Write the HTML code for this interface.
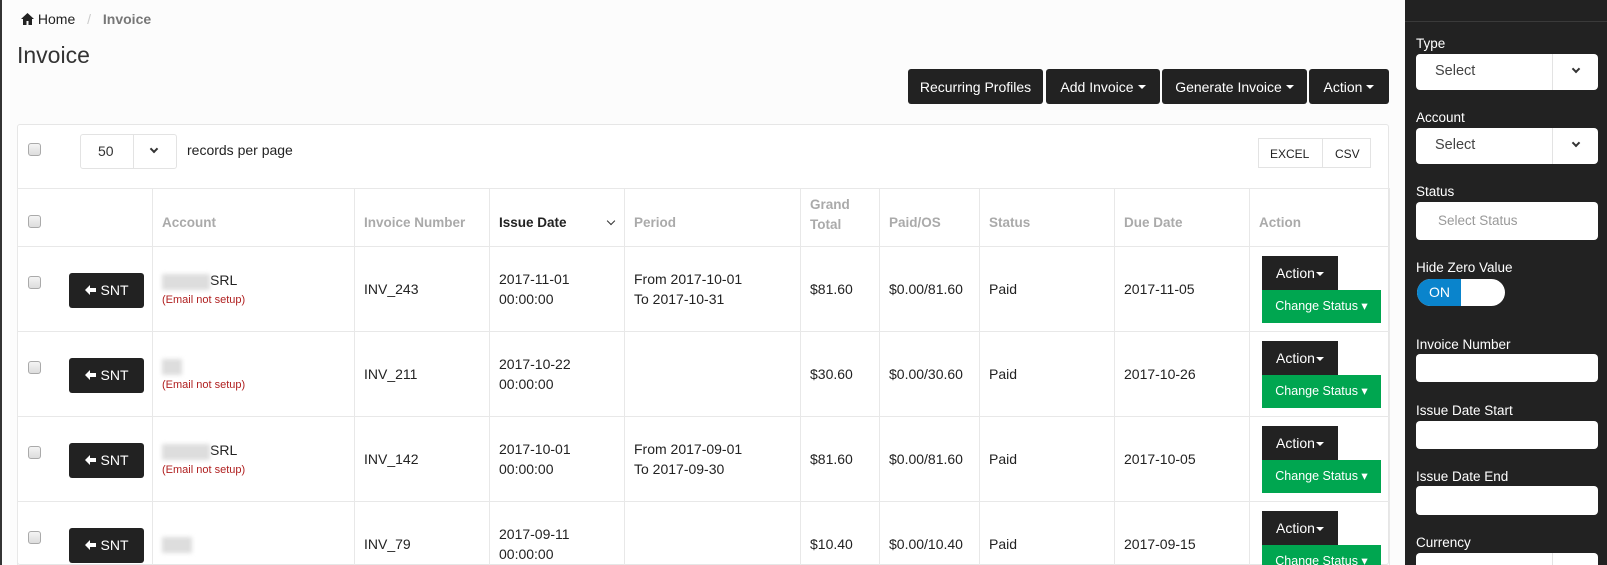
<!DOCTYPE html>
<html><head><meta charset="utf-8"><style>
*{box-sizing:border-box;margin:0;padding:0}
html{width:1607px;height:565px;overflow:hidden}
body{width:1607px;height:565px;overflow:hidden;background:#fcfcfc;font-family:"Liberation Sans",Arial,sans-serif;font-size:14px;color:#333;position:relative}
.abs{position:absolute}
.lb{position:absolute;left:0;top:0;width:2px;height:565px;background:#333}
.bc{top:11px;left:21px;font-size:14px;color:#222}
.title{top:42px;left:17px;font-size:23px;color:#333}
.tb{position:absolute;top:69px;height:35px;background:#222;color:#fff;border-radius:3px;font-size:14px;display:flex;align-items:center;justify-content:center}
.caret{display:inline-block;width:0;height:0;border-left:4px solid transparent;border-right:4px solid transparent;border-top:4px solid #fff;margin-left:4px;vertical-align:middle}
.panel{position:absolute;left:17px;top:124px;width:1372px;height:441px;background:#fff;border:1px solid #e6e6e6;border-radius:3px}
.cb{position:absolute;width:13px;height:13px;border:1px solid #aaa;border-radius:3px;background:linear-gradient(#f4f4f4,#ddd)}
.cbi{display:inline-block;width:13px;height:13px;border:1px solid #aaa;border-radius:3px;background:linear-gradient(#f4f4f4,#ddd)}
table{position:absolute;left:17px;top:188px;border-collapse:collapse;width:1372px;table-layout:fixed}
td,th{border:1px solid #e8e8e8;vertical-align:middle;text-align:left;padding:0 9px;font-size:14px}
th{height:58px;color:#aaa;font-weight:bold;font-size:13.5px;padding-top:10px}
td{height:85px;color:#222}
.first{display:flex;align-items:center;padding-left:10px}
.snt{display:inline-flex;align-items:center;justify-content:center;gap:5px;width:75px;height:35px;background:#222;color:#fff;border-radius:3px;font-size:14px;margin-left:28px;margin-top:2px}
.blur{display:inline-block;width:48px;height:16px;background:#ddd;filter:blur(2px);vertical-align:middle}
.em{color:#b02020;font-size:11px;margin-top:4px}
.act{display:block;width:76px;height:34px;background:#222;color:#fff;line-height:34px;text-align:center;font-size:14px;margin-left:3px}
.chg{display:block;width:119px;height:33px;background:#00a650;color:#fff;line-height:33px;text-align:center;font-size:12.5px;margin-left:3px}
.sc{display:inline-block;width:0;height:0;border-left:4px solid transparent;border-right:4px solid transparent;border-top:4px solid #fff;vertical-align:middle;margin-left:1px}
.side{position:absolute;left:1405px;top:0;width:202px;height:565px;background:#222}
.side .line{position:absolute;left:0;top:21px;width:202px;height:1px;background:#3a3a3a}
.lab{position:absolute;left:11px;color:#fff;font-size:13.5px}
.inp{position:absolute;left:11px;width:182px;background:#fff;border-radius:4px}
.chev{position:absolute;width:7px;height:7px;border-right:2px solid #333;border-bottom:2px solid #333;transform:rotate(45deg)}
</style></head><body>
<div class="lb"></div>
<div class="abs bc"><svg width="13" height="12" viewBox="0 0 13 12" style="vertical-align:-1px"><path d="M6.5 0L0 6h2v6h3.5V8h2v4H11V6h2z" fill="#222"/></svg> Home <span style="color:#ccc;margin:0 8px">/</span> <b style="color:#777">Invoice</b></div>
<div class="abs title">Invoice</div>
<div class="tb" style="left:908px;width:135px">Recurring Profiles</div>
<div class="tb" style="left:1046px;width:114px">Add Invoice<span class="caret"></span></div>
<div class="tb" style="left:1162px;width:145px">Generate Invoice<span class="caret"></span></div>
<div class="tb" style="left:1309px;width:80px">Action<span class="caret"></span></div>
<div class="panel"></div>
<div class="cb" style="left:28px;top:143px"></div>
<div class="abs" style="left:80px;top:134px;width:97px;height:35px;border:1px solid #e3e3e3;border-radius:3px;background:#fff"><span class="abs" style="left:17px;top:8px">50</span><div class="abs" style="left:52px;top:0;width:1px;height:33px;background:#e3e3e3"></div><div class="chev" style="left:70px;top:11px;width:6px;height:6px"></div></div>
<div class="abs" style="left:187px;top:142px;color:#222">records per page</div>
<div class="abs" style="left:1258px;top:138px;width:113px;height:30px;border:1px solid #e3e3e3;background:#fff;font-size:12px;color:#222"><span class="abs" style="left:11px;top:8px">EXCEL</span><div class="abs" style="left:63px;top:0;width:1px;height:28px;background:#e3e3e3"></div><span class="abs" style="left:76px;top:8px">CSV</span></div>
<table>
<colgroup><col style="width:135px"><col style="width:202px"><col style="width:135px"><col style="width:135px"><col style="width:176px"><col style="width:79px"><col style="width:100px"><col style="width:135px"><col style="width:135px"><col style="width:140px"></colgroup>
<tr><th style="padding-left:10px"><span class="cbi" style="margin-top:-4px;vertical-align:middle"></span></th><th>Account</th><th>Invoice Number</th><th style="color:#222;position:relative">Issue Date<span class="chev" style="right:10px;top:29px;width:6px;height:6px;border-width:1.5px"></span></th><th>Period</th><th style="padding-top:0">Grand<br><span style="line-height:26px">Total</span></th><th>Paid/OS</th><th>Status</th><th>Due Date</th><th>Action</th></tr>
<tr><td style="padding:0"><div class="first"><span class="cbi" style="margin-top:-14px"></span><span class="snt"><svg width="11" height="10" viewBox="0 0 11 10"><path d="M0 5L5 0V3H11V7H5V10Z" fill="#fff"/></svg>SNT</span></div></td><td><span class="blur"></span>SRL<div class="em">(Email not setup)</div></td><td>INV_243</td><td style="line-height:20px">2017-11-01<br>00:00:00</td><td style="line-height:20px">From 2017-10-01<br>To 2017-10-31</td><td>$81.60</td><td>$0.00/81.60</td><td>Paid</td><td>2017-11-05</td><td><span class="act">Action<span class="sc"></span></span><span class="chg">Change Status &#9662;</span></td></tr>
<tr><td style="padding:0"><div class="first"><span class="cbi" style="margin-top:-14px"></span><span class="snt"><svg width="11" height="10" viewBox="0 0 11 10"><path d="M0 5L5 0V3H11V7H5V10Z" fill="#fff"/></svg>SNT</span></div></td><td><span class="blur" style="width:20px"></span><div class="em">(Email not setup)</div></td><td>INV_211</td><td style="line-height:20px">2017-10-22<br>00:00:00</td><td></td><td>$30.60</td><td>$0.00/30.60</td><td>Paid</td><td>2017-10-26</td><td><span class="act">Action<span class="sc"></span></span><span class="chg">Change Status &#9662;</span></td></tr>
<tr><td style="padding:0"><div class="first"><span class="cbi" style="margin-top:-14px"></span><span class="snt"><svg width="11" height="10" viewBox="0 0 11 10"><path d="M0 5L5 0V3H11V7H5V10Z" fill="#fff"/></svg>SNT</span></div></td><td><span class="blur"></span>SRL<div class="em">(Email not setup)</div></td><td>INV_142</td><td style="line-height:20px">2017-10-01<br>00:00:00</td><td style="line-height:20px">From 2017-09-01<br>To 2017-09-30</td><td>$81.60</td><td>$0.00/81.60</td><td>Paid</td><td>2017-10-05</td><td><span class="act">Action<span class="sc"></span></span><span class="chg">Change Status &#9662;</span></td></tr>
<tr><td style="padding:0"><div class="first"><span class="cbi" style="margin-top:-14px"></span><span class="snt"><svg width="11" height="10" viewBox="0 0 11 10"><path d="M0 5L5 0V3H11V7H5V10Z" fill="#fff"/></svg>SNT</span></div></td><td><span class="blur" style="width:30px"></span></td><td>INV_79</td><td style="line-height:20px">2017-09-11<br>00:00:00</td><td></td><td>$10.40</td><td>$0.00/10.40</td><td>Paid</td><td>2017-09-15</td><td><span class="act">Action<span class="sc"></span></span><span class="chg">Change Status &#9662;</span></td></tr>
</table>
<div class="side"><div class="line"></div>
<div class="lab" style="top:36px">Type</div>
<div class="inp" style="top:54px;height:36px"><span class="abs" style="left:19px;top:9px;font-size:14.5px;color:#444">Select</span><div class="abs" style="left:136px;top:0;width:1px;height:36px;background:#e3e3e3"></div><div class="chev" style="left:157px;top:12px;width:6px;height:6px"></div></div>
<div class="lab" style="top:110px">Account</div>
<div class="inp" style="top:128px;height:36px"><span class="abs" style="left:19px;top:9px;font-size:14.5px;color:#444">Select</span><div class="abs" style="left:136px;top:0;width:1px;height:36px;background:#e3e3e3"></div><div class="chev" style="left:157px;top:12px;width:6px;height:6px"></div></div>
<div class="lab" style="top:184px">Status</div>
<div class="inp" style="top:202px;height:38px"><span class="abs" style="left:22px;top:11px;font-size:13.5px;color:#999">Select Status</span></div>
<div class="lab" style="top:260px">Hide Zero Value</div>
<div class="abs" style="left:12px;top:279px;width:88px;height:27px;background:#fff;border-radius:14px;overflow:hidden"><div class="abs" style="left:0;top:0;width:44px;height:27px;background:#0a84cc;color:#fff;font-size:14px;line-height:27px;padding-left:12px">ON</div></div>
<div class="lab" style="top:337px">Invoice Number</div>
<div class="inp" style="top:354px;height:28px"></div>
<div class="lab" style="top:403px">Issue Date Start</div>
<div class="inp" style="top:421px;height:28px"></div>
<div class="lab" style="top:469px">Issue Date End</div>
<div class="inp" style="top:486px;height:29px"></div>
<div class="lab" style="top:535px">Currency</div>
<div class="inp" style="top:553px;height:30px"><div class="abs" style="left:136px;top:0;width:1px;height:30px;background:#e3e3e3"></div></div>
</div>
</body></html>
